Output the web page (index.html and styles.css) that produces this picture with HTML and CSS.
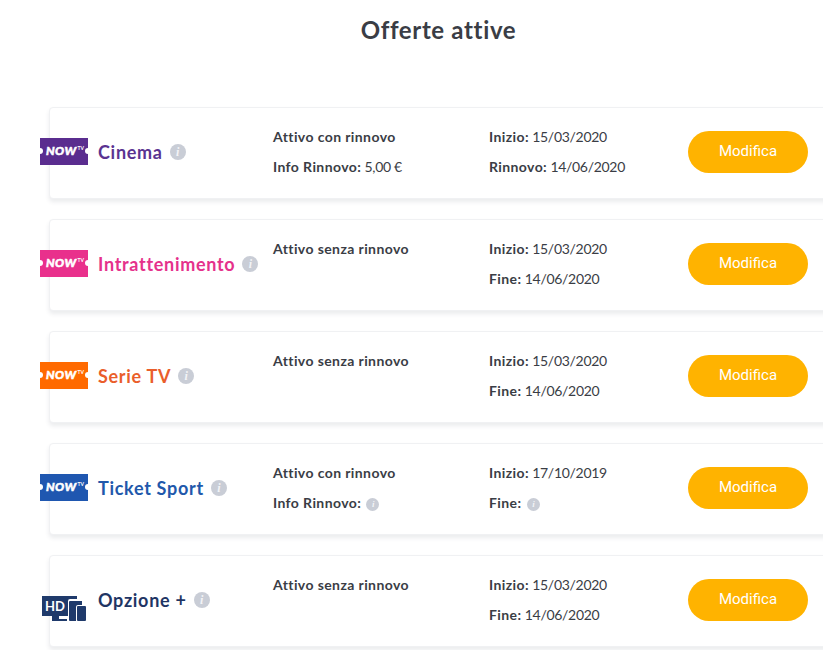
FILE: index.html
```html
<!DOCTYPE html>
<html lang="it">
<head>
<meta charset="utf-8">
<title>Offerte attive</title>
<link rel="stylesheet" href="styles.css">
</head>
<body>
<main class="page">
  <h1 class="title">Offerte attive</h1>
  <section class="offers">

    <article class="card">
      <div class="product">
        <div class="logo logo-cinema"><span class="dot"></span><span class="now">NOW</span><span class="tv">TV</span><span class="dot"></span></div>
        <span class="name name-cinema">Cinema</span>
        <span class="info"><i>i</i></span>
      </div>
      <div class="status">
        <p><b>Attivo con rinnovo</b></p>
        <p><b>Info Rinnovo:</b> 5,00 €</p>
      </div>
      <div class="dates">
        <p><b>Inizio:</b> 15/03/2020</p>
        <p><b>Rinnovo:</b> 14/06/2020</p>
      </div>
      <button class="edit">Modifica</button>
    </article>

    <article class="card">
      <div class="product">
        <div class="logo logo-ent"><span class="dot"></span><span class="now">NOW</span><span class="tv">TV</span><span class="dot"></span></div>
        <span class="name name-ent">Intrattenimento</span>
        <span class="info"><i>i</i></span>
      </div>
      <div class="status">
        <p><b>Attivo senza rinnovo</b></p>
      </div>
      <div class="dates">
        <p><b>Inizio:</b> 15/03/2020</p>
        <p><b>Fine:</b> 14/06/2020</p>
      </div>
      <button class="edit">Modifica</button>
    </article>

    <article class="card">
      <div class="product">
        <div class="logo logo-serie"><span class="dot"></span><span class="now">NOW</span><span class="tv">TV</span><span class="dot"></span></div>
        <span class="name name-serie">Serie TV</span>
        <span class="info"><i>i</i></span>
      </div>
      <div class="status">
        <p><b>Attivo senza rinnovo</b></p>
      </div>
      <div class="dates">
        <p><b>Inizio:</b> 15/03/2020</p>
        <p><b>Fine:</b> 14/06/2020</p>
      </div>
      <button class="edit">Modifica</button>
    </article>

    <article class="card">
      <div class="product">
        <div class="logo logo-sport"><span class="dot"></span><span class="now">NOW</span><span class="tv">TV</span><span class="dot"></span></div>
        <span class="name name-sport">Ticket Sport</span>
        <span class="info"><i>i</i></span>
      </div>
      <div class="status">
        <p><b>Attivo con rinnovo</b></p>
        <p><b>Info Rinnovo:</b> <span class="info info-small"><i>i</i></span></p>
      </div>
      <div class="dates">
        <p><b>Inizio:</b> 17/10/2019</p>
        <p><b>Fine:</b> <span class="info info-small"><i>i</i></span></p>
      </div>
      <button class="edit">Modifica</button>
    </article>

    <article class="card">
      <div class="product">
        <svg class="hd-icon" width="48" height="26" viewBox="0 0 48 26" aria-hidden="true">
          <path fill="#1f3a6b" d="M2 0h35v3h-7a2 2 0 0 0-2 2v15H2z"/>
          <path fill="#1f3a6b" d="M12 20h7v3h8v2H12z"/>
          <path fill="#1f3a6b" d="M30 5h12v4h-4a2 2 0 0 0-2 2v14h-6a1 1 0 0 1-1-1V6a1 1 0 0 1 1-1z"/>
          <rect fill="#1f3a6b" x="37" y="10" width="9" height="15" rx="1"/>
          <text class="hd-text" x="5" y="15">HD</text>
        </svg>
        <span class="name name-opt">Opzione +</span>
        <span class="info"><i>i</i></span>
      </div>
      <div class="status">
        <p><b>Attivo senza rinnovo</b></p>
      </div>
      <div class="dates">
        <p><b>Inizio:</b> 15/03/2020</p>
        <p><b>Fine:</b> 14/06/2020</p>
      </div>
      <button class="edit">Modifica</button>
    </article>

  </section>
</main>
</body>
</html>
```

FILE: styles.css
```css
* {
  box-sizing: border-box;
}

html,
body {
  margin: 0;
  height: 650px;
  overflow: hidden;
  background: #fff;
}

body {
  font-family: "Lato", "Liberation Sans", sans-serif;
  font-variant-ligatures: none;
  color: #3a3d45;
}

.page {
  width: 823px;
}

.title {
  margin: 0;
  padding: 15px 0 0 54px;
  height: 107px;
  text-align: center;
  font-size: 24px;
  line-height: 30px;
  font-weight: 700;
  letter-spacing: 0.65px;
  color: #3a3d45;
}

.offers {
  display: flex;
  flex-direction: column;
  gap: 20px;
  padding-left: 49px;
}

.card {
  display: flex;
  align-items: flex-start;
  width: 800px;
  height: 92px;
  background: #fff;
  border: 1px solid #f0f1f3;
  border-radius: 4px;
  box-shadow: 0 3px 4px rgba(60, 70, 90, 0.1);
}

.product {
  display: flex;
  align-items: center;
  width: 233px;
  height: 88px;
  margin-left: -10px;
  flex: none;
}

.logo {
  display: flex;
  align-items: center;
  justify-content: space-between;
  width: 48px;
  height: 27px;
  margin-top: -2px;
  margin-right: 10px;
  overflow: hidden;
  flex: none;
}

.dot {
  width: 6px;
  height: 6px;
  border-radius: 50%;
  background: #fff;
  flex: none;
}

.dot:first-child {
  margin-left: -3px;
}

.dot:last-child {
  margin-right: -3px;
}

.now {
  font-size: 12px;
  line-height: 12px;
  font-weight: 900;
  font-style: italic;
  color: #fff;
  letter-spacing: 0.5px;
  -webkit-text-stroke: 0.5px #fff;
  margin-left: 2px;
}

.tv {
  font-size: 5px;
  line-height: 5px;
  font-weight: 700;
  color: #fff;
  margin-top: -5px;
}

.logo-cinema { background: #5a2d8f; }
.logo-ent { background: #e9308c; }
.logo-serie { background: #ff6a00; }
.logo-sport { background: #1f57b0; }

.hd-icon {
  width: 48px;
  height: 26px;
  margin-top: 18px;
  margin-right: 10px;
  flex: none;
}

.hd-text {
  font-family: "Lato", sans-serif;
  font-size: 13px;
  font-weight: 700;
  fill: #fff;
}

.name {
  font-size: 18px;
  line-height: 24px;
  font-weight: 700;
  letter-spacing: 0.7px;
}

.name-cinema { color: #5a3391; }
.name-ent { color: #e5318b; }
.name-serie { color: #ea5e2b; }
.name-sport { color: #2158ab; }
.name-opt { color: #1f3564; }

.info {
  display: inline-flex;
  align-items: center;
  justify-content: center;
  width: 16px;
  height: 16px;
  margin-left: 7px;
  border-radius: 50%;
  background: #c9cdd6;
  flex: none;
}

.info i {
  font-family: "Liberation Serif", serif;
  font-size: 12px;
  line-height: 12px;
  font-weight: 700;
  color: #f3f4f6;
}

.info-small {
  width: 13px;
  height: 13px;
  margin-left: 2px;
  vertical-align: middle;
}

.info-small i {
  font-size: 9px;
  line-height: 9px;
}

.status,
.dates {
  padding-top: 14px;
  font-size: 14px;
  line-height: 30px;
  flex: none;
  letter-spacing: -0.3px;
}

.status {
  width: 216px;
}

.dates {
  width: 199px;
}

.status p,
.dates p {
  margin: 0;
  height: 30px;
}

.status b,
.dates b {
  font-weight: 700;
  letter-spacing: 0.4px;
}

.edit {
  width: 120px;
  height: 42px;
  margin-top: 23px;
  flex: none;
  border: 0;
  border-radius: 21px;
  background: #ffb300;
  color: #fff;
  font-family: "Roboto", sans-serif;
  font-size: 15px;
  line-height: 40px;
  font-weight: 400;
  padding: 0 0 2px;
}
```
